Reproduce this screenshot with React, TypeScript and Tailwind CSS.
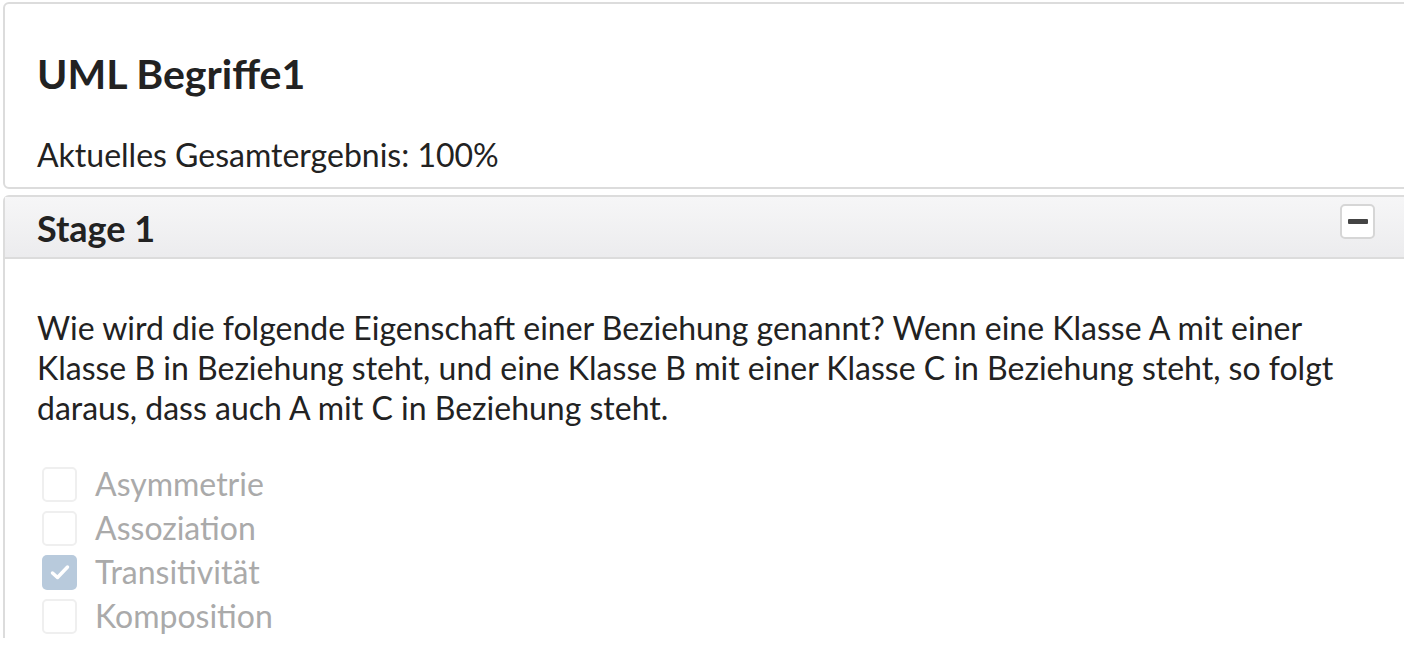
import React from 'react'

const options = [
  { label: 'Asymmetrie', checked: false },
  { label: 'Assoziation', checked: false },
  { label: 'Transitivität', checked: true },
  { label: 'Komposition', checked: false },
]

function Checkbox({ checked }: { checked: boolean }) {
  if (checked) {
    return (
      <span className="flex h-[35px] w-[35px] shrink-0 items-center justify-center rounded-[5px] bg-[#b8cadc]">
        <svg width="22" height="18" viewBox="0 0 22 18" fill="none">
          <path d="M3.5 10l5 4.5L18.5 4" stroke="#fff" strokeWidth="3.5" strokeLinecap="round" strokeLinejoin="round" />
        </svg>
      </span>
    )
  }
  return <span className="h-[35px] w-[35px] shrink-0 rounded-[5px] border-2 border-[#efefef] bg-white" />
}

export default function App() {
  return (
    <div className="min-h-screen overflow-hidden bg-white pl-[3px] pt-[2px] font-['Lato','Liberation_Sans',sans-serif] text-[#222]">
      <div className="-mr-4 rounded-l-[6px] border-2 border-[#dcdcdc] px-[32px] pb-[12px] pt-[46px]">
        <h1 className="text-[41px] font-bold leading-[48px]">UML Begriffe1</h1>
        <p className="mt-[37px] text-[32px] leading-[40px]">Aktuelles Gesamtergebnis: 100%</p>
      </div>

      <div className="-mr-4 mt-[6px] rounded-tl-[6px] border-2 border-b-0 border-[#dcdcdc]">
        <div className="flex h-[62px] items-start justify-between border-b-2 border-[#dcdcdc] bg-gradient-to-b from-[#f6f6f7] to-[#ececee] pl-[32px] pr-[43px]">
          <h2 className="pt-[11px] text-[36px] font-bold leading-[40px]">Stage 1</h2>
          <button className="mt-[7px] flex h-[35px] w-[35px] items-center justify-center rounded-[5px] border-2 border-[#d6d6d6] bg-white">
            <span className="h-[5px] w-[20px] rounded-[1px] bg-[#444]" />
          </button>
        </div>

        <div className="px-[32px] pt-[49px]">
          <p className="max-w-[1340px] text-[32px] leading-[40px]">
            Wie wird die folgende Eigenschaft einer Beziehung genannt? Wenn eine Klasse A mit einer Klasse B in
            Beziehung steht, und eine Klasse B mit einer Klasse C in Beziehung steht, so folgt daraus, dass auch A
            mit C in Beziehung steht.
          </p>

          <div className="mt-[34px] flex flex-col pl-[5px]">
            {options.map((o) => (
              <label key={o.label} className="flex h-[44px] items-center gap-[18px] text-[32px] leading-[40px] text-[#aaaaaa]">
                <Checkbox checked={o.checked} />
                <span>{o.label}</span>
              </label>
            ))}
          </div>
        </div>
      </div>
    </div>
  )
}
